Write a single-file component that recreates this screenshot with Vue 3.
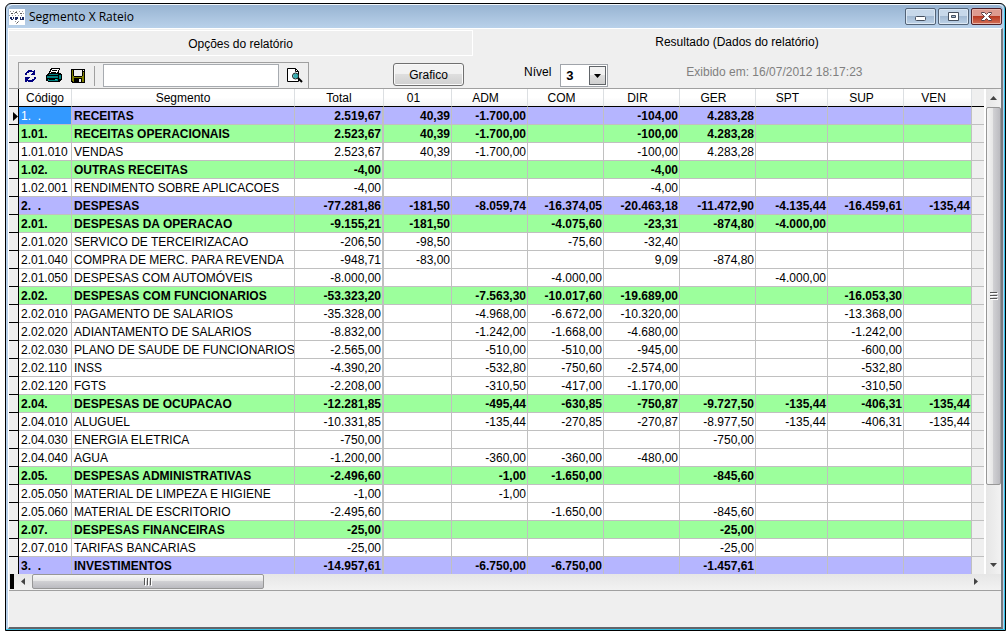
<script setup>
import { ref } from 'vue'

const search = ref('')
const level = ref('3')
const active = ref('result')
const columns = ['01', 'ADM', 'COM', 'DIR', 'GER', 'SPT', 'SUP', 'VEN']

// kind: t = top level, g = group, i = item; values follow Total and the columns in order
const rows = [
  ['t', '1.  .', 'RECEITAS', '2.519,67|40,39|-1.700,00||-104,00|4.283,28|||'],
  ['g', '1.01.', 'RECEITAS OPERACIONAIS', '2.523,67|40,39|-1.700,00||-100,00|4.283,28|||'],
  ['i', '1.01.010', 'VENDAS', '2.523,67|40,39|-1.700,00||-100,00|4.283,28|||'],
  ['g', '1.02.', 'OUTRAS RECEITAS', '-4,00||||-4,00||||'],
  ['i', '1.02.001', 'RENDIMENTO SOBRE APLICACOES', '-4,00||||-4,00||||'],
  ['t', '2.  .', 'DESPESAS', '-77.281,86|-181,50|-8.059,74|-16.374,05|-20.463,18|-11.472,90|-4.135,44|-16.459,61|-135,44'],
  ['g', '2.01.', 'DESPESAS DA OPERACAO', '-9.155,21|-181,50||-4.075,60|-23,31|-874,80|-4.000,00||'],
  ['i', '2.01.020', 'SERVICO DE TERCEIRIZACAO', '-206,50|-98,50||-75,60|-32,40||||'],
  ['i', '2.01.040', 'COMPRA DE MERC. PARA REVENDA', '-948,71|-83,00|||9,09|-874,80|||'],
  ['i', '2.01.050', 'DESPESAS COM AUTOMÓVEIS', '-8.000,00|||-4.000,00|||-4.000,00||'],
  ['g', '2.02.', 'DESPESAS COM FUNCIONARIOS', '-53.323,20||-7.563,30|-10.017,60|-19.689,00|||-16.053,30|'],
  ['i', '2.02.010', 'PAGAMENTO DE SALARIOS', '-35.328,00||-4.968,00|-6.672,00|-10.320,00|||-13.368,00|'],
  ['i', '2.02.020', 'ADIANTAMENTO DE SALARIOS', '-8.832,00||-1.242,00|-1.668,00|-4.680,00|||-1.242,00|'],
  ['i', '2.02.030', 'PLANO DE SAUDE DE FUNCIONARIOS', '-2.565,00||-510,00|-510,00|-945,00|||-600,00|'],
  ['i', '2.02.110', 'INSS', '-4.390,20||-532,80|-750,60|-2.574,00|||-532,80|'],
  ['i', '2.02.120', 'FGTS', '-2.208,00||-310,50|-417,00|-1.170,00|||-310,50|'],
  ['g', '2.04.', 'DESPESAS DE OCUPACAO', '-12.281,85||-495,44|-630,85|-750,87|-9.727,50|-135,44|-406,31|-135,44'],
  ['i', '2.04.010', 'ALUGUEL', '-10.331,85||-135,44|-270,85|-270,87|-8.977,50|-135,44|-406,31|-135,44'],
  ['i', '2.04.030', 'ENERGIA ELETRICA', '-750,00|||||-750,00|||'],
  ['i', '2.04.040', 'AGUA', '-1.200,00||-360,00|-360,00|-480,00||||'],
  ['g', '2.05.', 'DESPESAS ADMINISTRATIVAS', '-2.496,60||-1,00|-1.650,00||-845,60|||'],
  ['i', '2.05.050', 'MATERIAL DE LIMPEZA E HIGIENE', '-1,00||-1,00||||||'],
  ['i', '2.05.060', 'MATERIAL DE ESCRITORIO', '-2.495,60|||-1.650,00||-845,60|||'],
  ['g', '2.07.', 'DESPESAS FINANCEIRAS', '-25,00|||||-25,00|||'],
  ['i', '2.07.010', 'TARIFAS BANCARIAS', '-25,00|||||-25,00|||'],
  ['t', '3.  .', 'INVESTIMENTOS', '-14.957,61||-6.750,00|-6.750,00||-1.457,61|||'],
].map(([kind, code, name, values]) => ({ kind, code, name, values: values.split('|') }))
</script>

<template>
  <main class="desktop">
    <section class="window">
      <header class="titlebar">
        <svg class="app-icon" width="16" height="16" viewBox="0 0 16 16" shape-rendering="crispEdges">
          <path fill="#fff" d="M0 0h16v16H0z" />
          <path stroke="#9a9a9a" stroke-dasharray="1 2" d="M1 2.500h14M2 4.500h13M0 6.500h15M6 12.500h5M7 14.500h2" />
          <path stroke="#555" d="M2 4.500h2M6 3.500h2M11 4.500h2M8 13.500h1" />
          <path stroke="#1c2c66" stroke-width="2" d="M1 9h2M4 9h1M6 9h3M11 9h1M13 9h2" />
          <path stroke="#1c2c66" d="M2 10.500h2M6 10.500h2M11 10.500h4" />
        </svg>
        <h1>Segmento X Rateio</h1>
        <div class="win-buttons">
          <button aria-label="Minimizar">
            <svg width="28" height="14" viewBox="0 0 28 14"><rect x="9.500" y="6.500" width="10" height="4" rx="1" fill="#fff" stroke="#454f5e" /></svg>
          </button>
          <button aria-label="Restaurar">
            <svg width="28" height="14" viewBox="0 0 28 14"><path fill="#fff" fill-rule="evenodd" stroke="#454f5e" d="M9.500 2.500h10v8h-10zM12.500 5.500h4v2h-4z" /></svg>
          </button>
          <button class="close" aria-label="Fechar">
            <svg width="28" height="14" viewBox="0 0 28 14"><path fill="#fff" stroke="#5a4046" d="M9.500 2.500h3l2 2 2-2h3v1l-3 3 3 3v1h-3l-2-2-2 2h-3v-1l3-3-3-3z" /></svg>
          </button>
        </div>
      </header>

      <div class="client">
        <nav class="tabs">
          <button class="tab" :class="{ idle: active !== 'options' }" @click="active = 'options'">Opções do relatório</button>
          <button class="tab" :class="{ idle: active !== 'result' }" @click="active = 'result'">Resultado (Dados do relatório)</button>
        </nav>

        <div class="controls">
          <div class="toolbar">
            <button aria-label="Atualizar">
              <svg width="12" height="12" viewBox="0 0 12 12" shape-rendering="crispEdges">
                <path fill="#000080" d="M3 0h4v1h2v-1h1v5H6V4h1V3h1V2H4v1H2v2H0V3h1V2h1V1h1zM0 7h5v1H4v1H3v1h4V9h2V7h2v2h-1v1H9v1H8v1H3v-1H2v1H0z" />
              </svg>
            </button>
            <button aria-label="Imprimir">
              <svg width="16" height="15" viewBox="0 0 16 15" shape-rendering="crispEdges">
                <path d="M5 0h9v2h-1v3h2v1h1v6h-1v1h-1v1H2v-1H0V7h1V6h1V5h1V3h1V1h1z" />
                <path fill="#fff" d="M6 1h7v1h-1v2h-1v1H4V4h1V2h1z" />
                <path fill="#008080" d="M3 6h9v1H3zM1 8h11v2H1zM13 7h2v4h-2zM2 11h10v2H2z" />
                <path stroke="#000" d="M6 2.500h5M5 4.500h5M3 11.500h6" />
                <path fill="#00d8c8" d="M9 11h2v1H9z" />
              </svg>
            </button>
            <button aria-label="Salvar">
              <svg width="14" height="14" viewBox="0 0 14 14" shape-rendering="crispEdges">
                <path d="M0 0h14v14H1v-1H0z" />
                <path fill="#808000" d="M1 1h1v6h1v1h8V7h1V3h1v10h-2V9H3v4H2v-1H1z" />
                <path fill="#efefef" d="M3 1h8v6H3zM12 1h1v1h-1zM8 10h2v3H8z" />
              </svg>
            </button>
            <span class="divider"></span>
            <input v-model="search" type="text" aria-label="Pesquisar" />
            <button class="preview" aria-label="Localizar">
              <svg width="16" height="15" viewBox="0 0 16 15">
                <path fill="#fff" stroke="#000" d="M.5.500h8l3 3v10H.5zM8.500.500v3h3" />
                <circle cx="8.500" cy="8" r="3" fill="#70d8df" stroke="#222" />
                <path fill="none" stroke="#008080" d="M8 6v4M10 6v4" />
                <path stroke="#000" stroke-width="2" d="m11 10 4 4" />
              </svg>
            </button>
          </div>
          <button class="chart">Grafico</button>
          <label class="level" for="level">Nível</label>
          <div class="select">
            <select id="level" v-model="level">
              <option>1</option>
              <option>2</option>
              <option>3</option>
            </select>
            <span class="drop"><svg width="7" height="4" viewBox="0 0 7 4"><path d="M0 0h7L3.500 4z" /></svg></span>
          </div>
          <span class="shown">Exibido em: 16/07/2012 18:17:23</span>
        </div>

        <div class="grid">
          <table>
            <colgroup>
              <col class="c-mark" />
              <col class="c-code" />
              <col class="c-name" />
              <col class="c-total" />
              <col v-for="c in columns" :key="c" :class="'c-' + c" />
              <col />
            </colgroup>
            <thead>
              <tr>
                <th class="mark"></th>
                <th>Código</th>
                <th>Segmento</th>
                <th>Total</th>
                <th v-for="c in columns" :key="c" class="unit">{{ c }}</th>
                <th class="rest"></th>
              </tr>
            </thead>
            <tbody>
              <tr v-for="(row, n) in rows" :key="row.code" :class="'row-' + row.kind">
                <td class="mark">
                  <svg v-if="n === 0" width="6" height="9" viewBox="0 0 6 9"><path d="M1 0l5 4.500L1 9z" /></svg>
                </td>
                <td class="code" :class="{ selected: n === 0 }">{{ row.code }}</td>
                <td>{{ row.name }}</td>
                <td v-for="(v, i) in row.values" :key="i" class="num" :class="{ total: i === 0 }">{{ v }}</td>
                <td class="rest"></td>
              </tr>
            </tbody>
          </table>
          <div class="vscroll">
            <span class="arrow"><svg width="7" height="4" viewBox="0 0 7 4"><path fill="#444" d="M0 4h7L3.500 0z" /></svg></span>
            <span class="thumb"><svg width="8" height="8" viewBox="0 0 8 8"><path stroke="#555" d="M0 .5h7M0 3.500h7M0 6.500h7" /><path stroke="#fff" d="M1 1.500h7M1 4.500h7M1 7.500h7" /></svg></span>
            <span class="arrow end"><svg width="7" height="4" viewBox="0 0 7 4"><path fill="#444" d="M0 0h7L3.500 4z" /></svg></span>
          </div>
        </div>
        <div class="hscroll">
          <span class="split"></span>
          <span class="arrow"><svg width="4" height="7" viewBox="0 0 4 7"><path fill="#444" d="M4 0v7L0 3.500z" /></svg></span>
          <span class="thumb"><svg width="8" height="8" viewBox="0 0 8 8"><path stroke="#555" d="M.5 0v7M3.500 0v7M6.500 0v7" /><path stroke="#fff" d="M1.500 1v7M4.500 1v7M7.500 1v7" /></svg></span>
          <span class="arrow end"><svg width="4" height="7" viewBox="0 0 4 7"><path fill="#444" d="M0 0v7l4-3.500z" /></svg></span>
        </div>
      </div>
    </section>
  </main>
</template>

<style>
body {
  background: #fff;
}
</style>

<style scoped>
* {
  box-sizing: border-box;
}
.desktop {
  display: flex;
  min-height: 100vh;
  padding: 3px 1px 2px 5px;
  font: 12px/16px "Liberation Sans", Arial, sans-serif;
  color: #000;
}
button {
  font: inherit;
  color: inherit;
  padding: 0;
  border: 0;
  background: none;
}
svg {
  display: block;
}
.window {
  flex: 1;
  min-width: 0;
  display: flex;
  flex-direction: column;
  padding: 0 2px 1px 2px;
  border: 1px solid #000;
  border-radius: 6px 6px 0 0;
  background: #b9d1ea;
  box-shadow: inset -1px -1px #35c4e8;
}
.titlebar {
  display: flex;
  align-items: center;
  height: 24px;
  padding: 0 1px;
  border-top: 1px solid #f4f8fc;
  border-radius: 5px 5px 0 0;
  background: linear-gradient(#98b4d2, #b9d1ea);
}
h1 {
  flex: 1;
  margin: 0 0 0 4px;
  font: 12px/18px "Open Sans", sans-serif;
}
.win-buttons {
  display: flex;
  gap: 2px;
}
.win-buttons button {
  width: 31px;
  height: 17px;
  border: 1px solid #536377;
  border-radius: 2px;
  background: linear-gradient(#c7d8ea 45%, #a3bad3 50%, #bdd2e8);
  box-shadow: inset 0 0 0 1px #dce8f4;
}
.win-buttons .close {
  border-color: #4f2028;
  background: linear-gradient(#dd9a8f 45%, #b83a22 50%, #d4715a);
  box-shadow: inset 0 0 0 1px #e9b4a8;
}
.client {
  flex: 1;
  display: flex;
  flex-direction: column;
  border: solid;
  border-width: 1px 2px 2px 1px;
  border-color: #fff #777a80 #63656a #fff;
  background: #efefef;
}
.tabs {
  display: flex;
  height: 27px;
  padding-top: 1px;
}
.tab {
  flex: 1;
  padding-bottom: 2px;
}
.tab:first-child {
  flex: 0 1 464px;
  padding: 2px 0 0;
}
.tab.idle {
  border: 1px solid #fff;
  border-left: 0;
}
.controls {
  display: flex;
  align-items: flex-start;
  height: 32px;
  padding: 6px 0 0 9px;
}
.toolbar {
  display: flex;
  align-items: center;
  width: 291px;
  height: 26px;
  padding: 1px 5px 1px 6px;
  border: 1px solid #a0a0a0;
  border-bottom: 0;
  gap: 9px;
}
.divider {
  width: 1px;
  height: 20px;
  background: #a0a0a0;
}
.toolbar input {
  flex: 1;
  min-width: 0;
  height: 23px;
  border: 1px solid #a7abb0;
  background: #fff;
  font: inherit;
}
.toolbar input,
.toolbar .preview {
  margin-left: -1px;
}
.chart {
  width: 71px;
  height: 23px;
  margin: 1px 0 0 84px;
  border: 1px solid #707070;
  border-radius: 3px;
  background: linear-gradient(#f2f2f2 45%, #dedede 50%, #d0d0d0);
  box-shadow: inset 0 0 0 1px #fafafa;
}
.level {
  margin-left: 60px;
  line-height: 20px;
}
.select {
  position: relative;
  width: 48px;
  height: 23px;
  margin: 2px 0 0 9px;
  border: 1px solid #a0a4aa;
  background: #fff;
}
.select select {
  width: 100%;
  height: 100%;
  padding: 0 0 0 5px;
  border: 0;
  appearance: none;
  background: none;
  font: bold 13px "Liberation Sans", Arial, sans-serif;
}
.drop {
  position: absolute;
  top: 1px;
  right: 1px;
  bottom: 1px;
  width: 17px;
  display: grid;
  place-items: center;
  border: 1px solid #606468;
  background: linear-gradient(#f2f2f2 45%, #dedede 50%, #d0d0d0);
  pointer-events: none;
}
.shown {
  margin-left: 78px;
  line-height: 20px;
  color: #808080;
}
.grid {
  display: flex;
  border-top: 1px solid #a0a0a0;
}
table {
  flex: 1;
  min-width: 0;
  width: 100%;
  table-layout: fixed;
  border-collapse: separate;
  border-spacing: 0;
}
.c-mark { width: 10px; }
.c-code { width: 53px; }
.c-name { width: 223px; }
.c-total { width: 89px; }
.c-01, .c-VEN { width: 68px; }
.c-ADM, .c-COM, .c-DIR, .c-GER, .c-SUP { width: 76px; }
.c-SPT { width: 72px; }
th,
td {
  height: 18px;
  padding: 2px 2px 0;
  overflow: hidden;
  white-space: pre;
  line-height: 15px;
  border-right: 1px solid #c0c0c0;
  border-bottom: 1px solid #c0c0c0;
}
th {
  font-weight: normal;
  text-align: center;
  background: linear-gradient(#fff 50%, #f2f3f4);
  border-right-color: #dcdfe2;
  border-bottom-color: #000;
}
th.unit {
  padding-right: 10px;
}
td {
  background: #fff;
}
.row-t td { background: #b5b5ff; }
.row-g td { background: #9cff9c; }
.row-t,
.row-g { font-weight: bold; }
td.num {
  text-align: right;
  padding-right: 1px;
}
td.total {
  border-right-width: 2px;
}
tr .mark.mark {
  padding: 2px 0 0 3px;
  background: #efefef;
  border-color: #000;
}
tr .rest.rest {
  background: #efefef;
  border-right: 0;
}
tr .selected.selected {
  background: #3399ff;
  color: #fff;
  font-weight: normal;
}
tbody tr:last-child td {
  height: 17px;
  border-bottom: 0;
}
.arrow {
  display: grid;
  place-items: center;
  flex: 0 0 18px;
}
.end {
  margin-top: auto;
}
.vscroll {
  display: flex;
  flex-direction: column;
  width: 17px;
  border-left: 2px solid #fff;
  background: linear-gradient(90deg, #e6e6e6, #f2f2f2);
}
.thumb {
  display: grid;
  place-items: center;
  border: 1px solid #979797;
  border-radius: 2px;
}
.vscroll .thumb {
  height: 378px;
  background: linear-gradient(90deg, #f5f5f5, #e6e6e6 45%, #d0d0d3 50%, #bbbbc0);
}
.hscroll {
  display: flex;
  height: 17px;
  padding: 0 16px 1px 1px;
  border-bottom: 1px solid #a0a0a0;
  background: linear-gradient(#e6e6e6, #f2f2f2);
}
.hscroll .split {
  width: 4px;
  background: #000;
}
.hscroll .thumb {
  width: 232px;
  background: linear-gradient(#f5f5f5, #e6e6e6 45%, #d0d0d3 50%, #bbbbc0);
}
.hscroll .end {
  margin: 0 0 0 auto;
}
</style>
